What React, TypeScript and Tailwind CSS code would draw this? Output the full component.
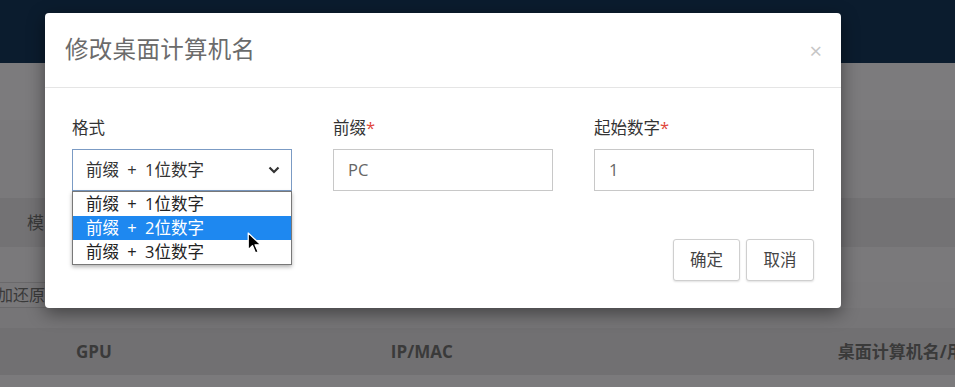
import React from 'react';

const cjk = { fontFamily: '"Open Sans", "Noto Sans CJK SC", sans-serif' };

const options = ['前缀 + 1位数字', '前缀 + 2位数字', '前缀 + 3位数字'];

const Cursor = () => (
  <svg width="15" height="23" viewBox="0 0 14 22" className="absolute left-[247px] top-[232px] z-20">
    <path d="M1 1 L1 17 L5 13 L8 20 L10.5 19 L7.5 12.2 L13 12.2 Z" fill="#000" stroke="#fff" strokeWidth="1.2" strokeLinejoin="round" />
  </svg>
);

export default function App() {
  return (
    <div className="relative w-[955px] h-[387px] overflow-hidden bg-[#7a797b]" style={cjk}>
      {/* page behind the backdrop */}
      <div className="h-[63px] bg-[#0b1c2e]" />
      <div className="h-[57px] bg-[#7c7b7d]" />
      <div className="h-[78px] bg-[#7a797b]" />
      <div className="h-[49px] bg-[#737274] flex items-center pl-[27px] text-[17px] text-[#3a3a3a]">模</div>
      <div className="h-[35px] bg-[#7a797b]" />
      <div className="h-[26px] bg-[#79787a] flex items-center">
        <span className="-ml-[3px] pr-[3px] h-full flex items-center border-y border-r border-[#6a696b] text-[16px] text-[#3a3a3a]">加还原</span>
      </div>
      <div className="h-[20px] bg-[#767577]" />
      <div className="h-[47px] bg-[#717072] flex items-center text-[17px] font-bold text-[#3a3a3a]">
        <span className="ml-[76px]">GPU</span>
        <span className="ml-[279px]">IP/MAC</span>
        <span className="ml-[385px] whitespace-nowrap">桌面计算机名/用户</span>
      </div>
      <div className="h-[12px] bg-[#7b7a7c]" />

      {/* modal */}
      <div className="absolute left-[45px] top-[13px] w-[796px] h-[295px] bg-white rounded-[4px] shadow-[0_5px_18px_rgba(0,0,0,0.45)]">
        <div className="h-[75px] px-[20px] flex items-center justify-between border-b border-[#e5e5e5]">
          <span className="text-[23.5px] text-[#6b6b6b] tracking-[0.3px]">修改桌面计算机名</span>
          <span className="text-[22px] leading-none text-[#c6c6c6] mr-[-1px]">×</span>
        </div>
        <div className="px-[27px] pt-[28px]">
          <div className="grid grid-cols-[220px_220px_220px] gap-x-[41px]">
            <div>
              <div className="h-[24px] text-[16.5px] text-[#333] leading-[24px]">格式</div>
              <div className="relative mt-[9px]">
                <div className="h-[42px] border border-[#7b9bc4] flex items-center justify-between pl-[13px] pr-[11px] text-[16.5px] text-[#333]">
                  <span className="[word-spacing:4px]">前缀 + 1位数字</span>
                  <svg width="12" height="8" viewBox="0 0 12 8">
                    <path d="M1.5 1.5 L6 6 L10.5 1.5" fill="none" stroke="#333" strokeWidth="2.2" />
                  </svg>
                </div>
                <div className="absolute left-0 top-full w-[220px] bg-white border border-[#787878] shadow-[0_2px_4px_rgba(0,0,0,0.3)] z-10">
                  {options.map((o, i) => (
                    <div
                      key={o}
                      className={`h-[24px] leading-[24px] pl-[13px] text-[16.5px] [word-spacing:4px] ${i === 1 ? 'bg-[#1e88f0] text-white' : 'text-[#222]'}`}
                    >
                      {o}
                    </div>
                  ))}
                </div>
              </div>
            </div>
            <div>
              <div className="h-[24px] text-[16.5px] text-[#333] leading-[24px]">
                前缀<span className="text-[#e0463a]">*</span>
              </div>
              <div className="mt-[9px] h-[42px] border border-[#c8c8c8] flex items-center pl-[14px] text-[16.5px] text-[#666]">PC</div>
            </div>
            <div>
              <div className="h-[24px] text-[16.5px] text-[#333] leading-[24px]">
                起始数字<span className="text-[#e0463a]">*</span>
              </div>
              <div className="mt-[9px] h-[42px] border border-[#c8c8c8] flex items-center pl-[14px] text-[16.5px] text-[#666]">1</div>
            </div>
          </div>
          <div className="mt-[48px] flex justify-end gap-[6px]">
            <button className="w-[67px] h-[42px] border border-[#cfcfcf] rounded-[3px] bg-white text-[16.5px] text-[#444] shadow-[0_1px_2px_rgba(0,0,0,0.12)]">确定</button>
            <button className="w-[68px] h-[42px] border border-[#cfcfcf] rounded-[3px] bg-white text-[16.5px] text-[#444] shadow-[0_1px_2px_rgba(0,0,0,0.12)]">取消</button>
          </div>
        </div>
      </div>

      <Cursor />
    </div>
  );
}
